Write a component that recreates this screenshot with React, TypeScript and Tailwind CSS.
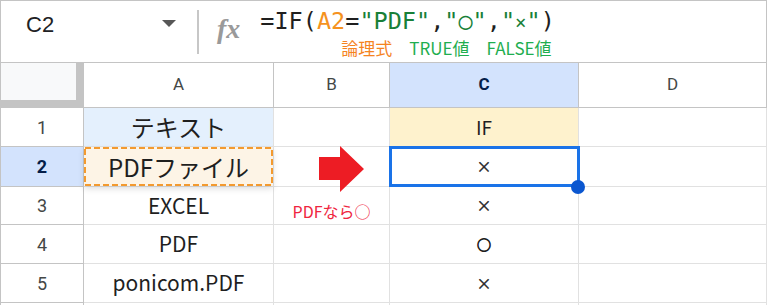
import React from "react";

const jp = "font-['Noto_Sans_CJK_JP','Noto_Sans',sans-serif]";
const ui = "font-['Roboto','Liberation_Sans',sans-serif]";

type Row = {
  num: string;
  a?: React.ReactNode;
  b?: React.ReactNode;
  c?: React.ReactNode;
  h: string;
};

function FormulaBar() {
  return (
    <div className="flex h-[62px] border-r border-b border-[#c4c4c4]">
      <div className="flex w-[196px] items-start justify-between pl-[25px] pr-[21px]">
        <span className="mt-[13px] font-['Liberation_Sans',sans-serif] text-[22px] leading-none text-[#202124]">
          C2
        </span>
        <span className="mt-[19px] h-0 w-0 border-x-[7.5px] border-t-[7px] border-x-transparent border-t-[#575757]" />
      </div>
      <div className="mt-[9px] h-[44px] w-[2px] bg-[#c7c7c7]" />
      <span className="ml-[18px] mt-[14px] font-['Liberation_Serif',serif] text-[28px] font-bold italic leading-none text-[#9a9a9a]">
        fx
      </span>
      <div className="ml-[20px] flex flex-col">
        <div className="mt-[9px] whitespace-pre font-['DejaVu_Sans_Mono','Liberation_Mono',monospace] text-[23.5px] leading-none text-[#1f1f1f]">
          =IF(<span className="text-[#f5921e]">A2</span>=
          <span className="text-[#188038]">"PDF"</span>,
          <span className="text-[#188038]">"○"</span>,
          <span className="text-[#188038]">"<span className="text-[19px]">×</span>"</span>)
        </div>
        <div className={`ml-[81px] mt-[5px] flex gap-[17px] text-[17px] leading-none ${jp}`}>
          <span className="text-[#f5841f]">論理式</span>
          <span className="text-[#1fae50]">TRUE値</span>
          <span className="text-[#1fae50]">FALSE値</span>
        </div>
      </div>
    </div>
  );
}

function ColHeader({ label, active }: { label: string; active?: boolean }) {
  return (
    <div
      className={`flex items-center justify-center border-r border-b border-[#c4c4c4] text-[17px] ${ui} ${
        active ? "bg-[#d3e3fd] font-bold text-[#041e49]" : "bg-white text-[#444746]"
      }`}
    >
      {label}
    </div>
  );
}

export default function App() {
  const rows: Row[] = [
    {
      num: "1",
      h: "h-[39px]",
      a: <div className="flex h-full items-center justify-center bg-[#e4f0fd] text-[24px]">テキスト</div>,
      c: <div className="flex h-full items-center justify-center bg-[#fef2cd] text-[19px]">IF</div>,
    },
    {
      num: "2",
      h: "h-[40px]",
      a: (
        <div className="relative z-10 flex h-full items-center justify-center bg-[#fdf4e6] text-[24px] shadow-[0_3px_6px_rgba(0,0,0,0.12)]">
          <svg className="absolute inset-0" width="189" height="39">
            <rect x="1" y="1" width="187" height="37" fill="none" stroke="#f39a2f" strokeWidth="2" strokeDasharray="6 3" />
          </svg>
          PDFファイル
        </div>
      ),
      c: <div className="flex h-full items-center justify-center text-[15px] [-webkit-text-stroke:0.4px_#1f1f1f]">×</div>,
    },
    {
      num: "3",
      h: "h-[38px]",
      a: <div className="flex h-full items-center justify-center text-[21px]">EXCEL</div>,
      b: (
        <div className="flex h-full items-center justify-center">
          <span className="mt-[11px] whitespace-nowrap text-[16px] text-[#ef2540]">PDFなら○</span>
        </div>
      ),
      c: <div className="flex h-full items-center justify-center text-[15px] [-webkit-text-stroke:0.4px_#1f1f1f]">×</div>,
    },
    {
      num: "4",
      h: "h-[39px]",
      a: <div className="flex h-full items-center justify-center text-[21px]">PDF</div>,
      c: <div className="flex h-full items-center justify-center text-[14px] [-webkit-text-stroke:0.9px_#1f1f1f]">○</div>,
    },
    {
      num: "5",
      h: "h-[39px]",
      a: <div className="flex h-full items-center justify-center text-[21px]">ponicom.PDF</div>,
      c: <div className="flex h-full items-center justify-center text-[15px] [-webkit-text-stroke:0.4px_#1f1f1f]">×</div>,
    },
    { num: "", h: "h-[39px]" },
  ];

  return (
    <div className="h-[305px] w-[769px] overflow-hidden bg-white">
      <div className="w-[767px] border-l border-t border-[#c4c4c4]">
        <FormulaBar />
        <div className={`relative grid grid-cols-[83px_190px_116px_189px_188px] text-[#1f1f1f] ${jp}`}>
          <div className="h-[45px] border-r-[8px] border-b-[8px] border-[#c4c4c4] bg-[#f8f9fa]" />
          <ColHeader label="A" />
          <ColHeader label="B" />
          <ColHeader label="C" active />
          <ColHeader label="D" />
          {rows.map((r, i) => (
            <React.Fragment key={i}>
              <div
                className={`${r.h} flex items-center justify-center border-r border-b border-[#c4c4c4] text-[18px] ${ui} ${
                  r.num === "2" ? "bg-[#d3e3fd] font-bold text-[#041e49]" : "bg-white text-[#444746]"
                }`}
              >
                {r.num}
              </div>
              <div className={`${r.h} border-r border-b border-[#e1e1e1]`}>{r.a}</div>
              <div className={`${r.h} border-r border-b border-[#e1e1e1]`}>{r.b}</div>
              <div className={`${r.h} border-r border-b border-[#e1e1e1]`}>{r.c}</div>
              <div className={`${r.h} border-r border-b border-[#e1e1e1]`} />
            </React.Fragment>
          ))}
          <svg className="absolute left-[318px] top-[83px] z-20" width="45" height="46" viewBox="0 0 45 46">
            <path d="M0 11 H21 V0 L45 23 L21 46 V34 H0 Z" fill="#ed1c24" />
          </svg>
          <div className="pointer-events-none absolute left-[388px] top-[83px] z-20 h-[41px] w-[191px] border-[3px] border-[#1a73e8]" />
          <div className="absolute left-[570px] top-[117px] z-30 h-[14px] w-[14px] rounded-full bg-[#0b57d0]" />
        </div>
      </div>
    </div>
  );
}
